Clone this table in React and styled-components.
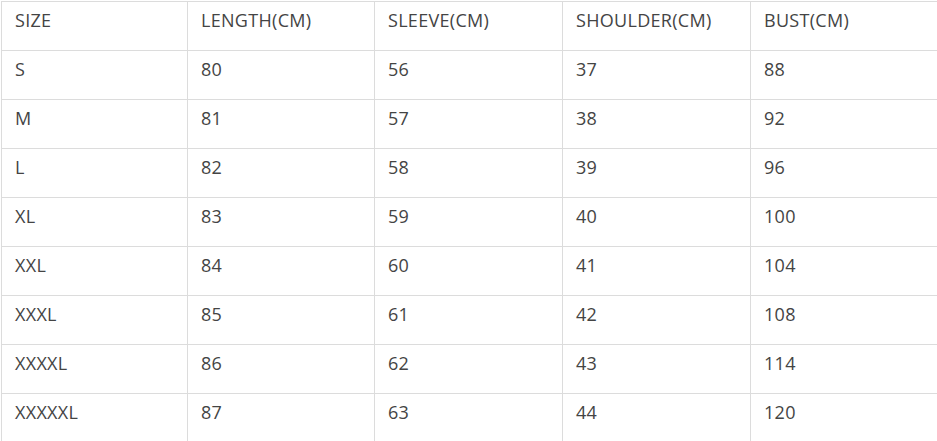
import React from "react";
import styled, { createGlobalStyle } from "styled-components";

const Global = createGlobalStyle`
  html, body { margin: 0; padding: 0; background: #fff; overflow: hidden; }
  body { font-family: "Open Sans", "Liberation Sans", sans-serif; }
`;

const Wrap = styled.div`
  width: 937px;
  height: 441px;
  overflow: hidden;
  padding: 1px 0 0 1px;
  box-sizing: border-box;
`;

const Table = styled.div`
  display: flex;
  flex-direction: column;
  width: 938px;
`;

const Row = styled.div`
  display: grid;
  grid-template-columns: 186px 187px 188px 188px 188px;
  height: 49px;
`;

const Cell = styled.div`
  box-sizing: border-box;
  border-left: 1px solid #dcdcdc;
  border-top: 1px solid #dcdcdc;
  padding: 6px 12px 6px 13px;
  font-size: 18px;
  line-height: 24px;
  letter-spacing: 0.3px;
  color: #444;
  font-weight: 400;
  white-space: nowrap;
`;

const head = ["SIZE", "LENGTH(CM)", "SLEEVE(CM)", "SHOULDER(CM)", "BUST(CM)"];
const rows = [
  ["S", "80", "56", "37", "88"],
  ["M", "81", "57", "38", "92"],
  ["L", "82", "58", "39", "96"],
  ["XL", "83", "59", "40", "100"],
  ["XXL", "84", "60", "41", "104"],
  ["XXXL", "85", "61", "42", "108"],
  ["XXXXL", "86", "62", "43", "114"],
  ["XXXXXL", "87", "63", "44", "120"],
];

export default function App() {
  return (
    <>
      <Global />
      <Wrap>
        <Table>
          {[head, ...rows].map((r, i) => (
            <Row key={i}>
              {r.map((c, j) => (
                <Cell key={j}>{c}</Cell>
              ))}
            </Row>
          ))}
        </Table>
      </Wrap>
    </>
  );
}
